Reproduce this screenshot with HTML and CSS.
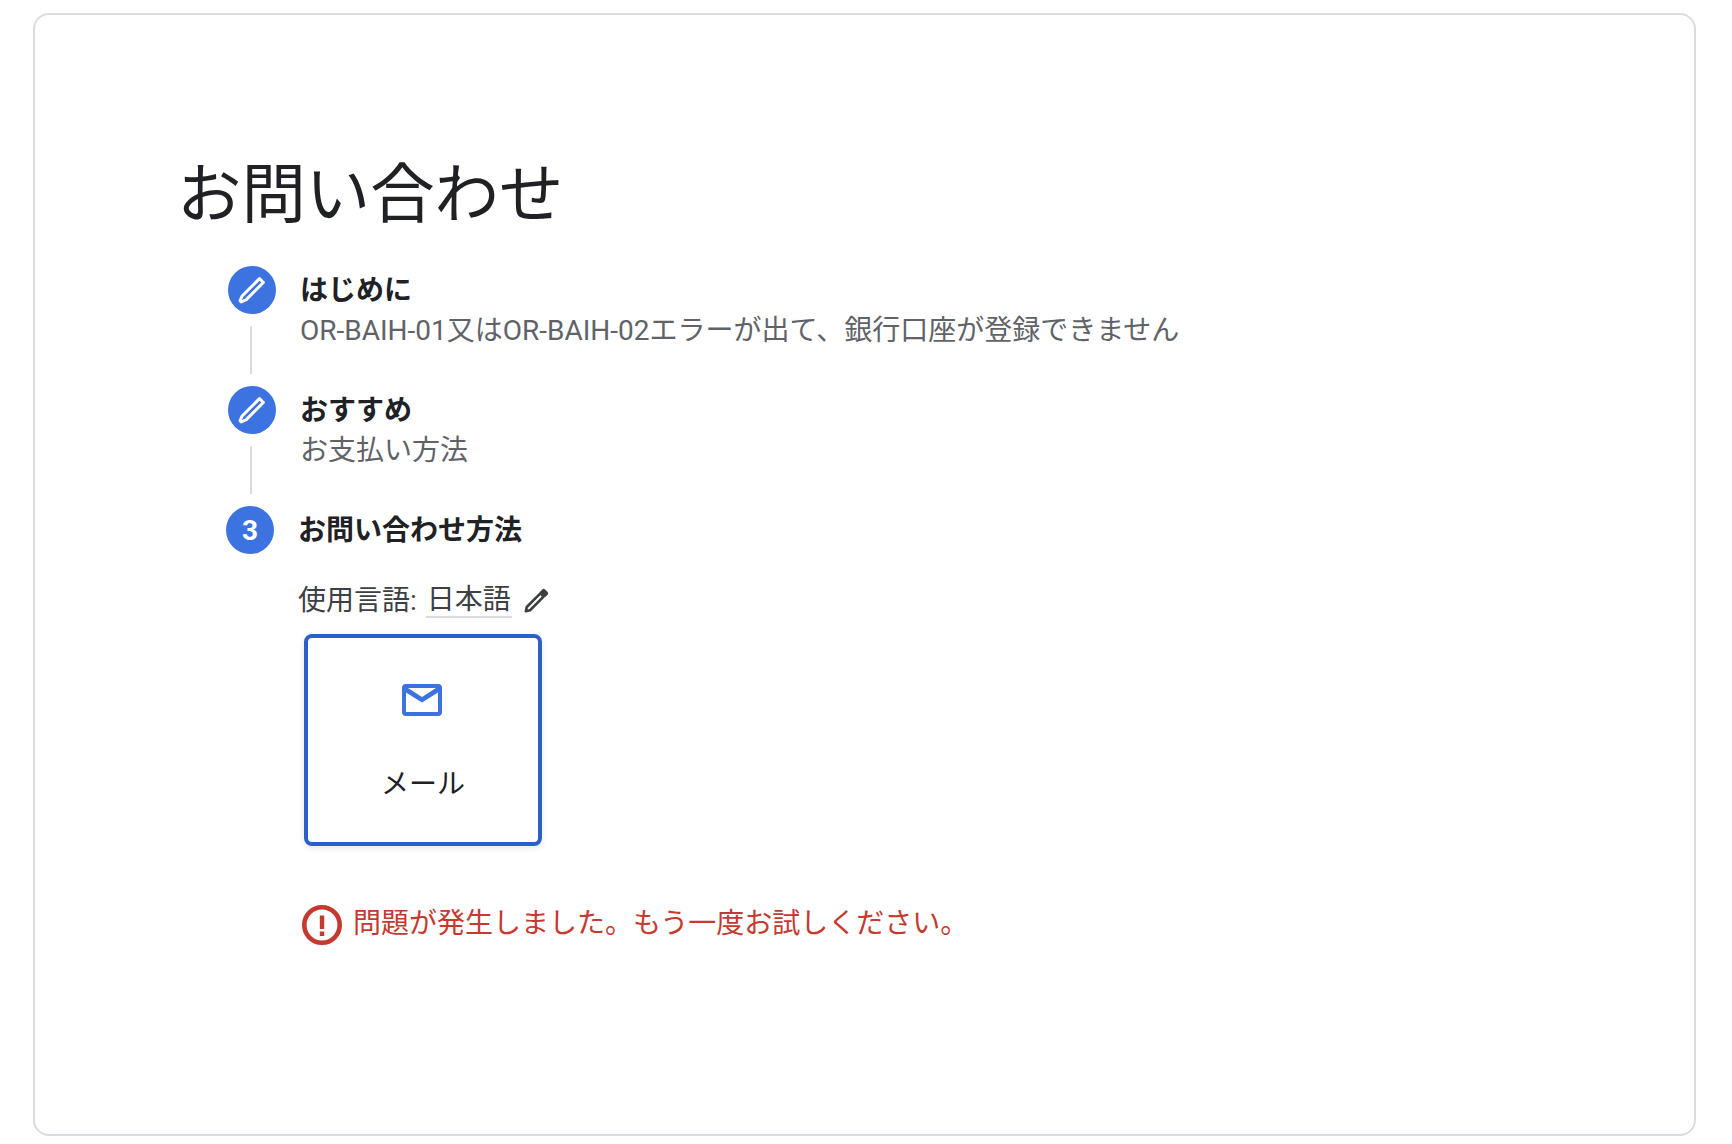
FILE: index.html
```html
<!DOCTYPE html>
<html lang="ja">
<head>
<meta charset="utf-8">
<title>お問い合わせ</title>
<link rel="stylesheet" href="styles.css">
</head>
<body>
<main class="card">
  <h1 class="title">お問い合わせ</h1>
  <section class="step">
    <div class="rail">
      <span class="badge">
        <svg class="badge-pencil" viewBox="0 0 28 28" fill="none" stroke="#fff" stroke-width="3" stroke-linejoin="round"><path d="M21.5 2.600 25.400 6.500 8 23.900 3.200 26 2 24.800 4.100 20Z"/></svg>
      </span>
      <span class="line"></span>
    </div>
    <div class="body">
      <h2 class="step-title">はじめに</h2>
      <p class="step-sub">OR-BAIH-01又はOR-BAIH-02エラーが出て、銀行口座が登録できません</p>
    </div>
  </section>
  <section class="step">
    <div class="rail">
      <span class="badge">
        <svg class="badge-pencil" viewBox="0 0 28 28" fill="none" stroke="#fff" stroke-width="3" stroke-linejoin="round"><path d="M21.5 2.600 25.400 6.500 8 23.900 3.200 26 2 24.800 4.100 20Z"/></svg>
      </span>
      <span class="line"></span>
    </div>
    <div class="body">
      <h2 class="step-title">おすすめ</h2>
      <p class="step-sub">お支払い方法</p>
    </div>
  </section>
  <section class="step step-current">
    <div class="rail">
      <span class="badge badge-num">3</span>
    </div>
    <div class="body">
      <h2 class="step-title">お問い合わせ方法</h2>
      <div class="lang">
        <span>使用言語:</span>
        <span class="lang-value">日本語</span>
        <svg class="lang-pencil" viewBox="0 0 24 24"><path fill="none" stroke="#3c4043" stroke-width="2.400" stroke-linejoin="round" d="M16 5 19 8 6.500 20.500 2.600 21.400 3.500 17.500Z"/><path fill="#3c4043" d="M15.500 3.600 17.800 1.300a1.800 1.800 0 0 1 2.500 0l2.400 2.400a1.800 1.800 0 0 1 0 2.500L20.400 8.500Z"/></svg>
      </div>
      <button class="channel" type="button">
        <svg class="mail" viewBox="0 0 40 32"><path fill="#3c73e0" fill-rule="evenodd" d="M4 0h32a4 4 0 0 1 4 4v24a4 4 0 0 1-4 4H4a4 4 0 0 1-4-4V4a4 4 0 0 1 4-4Zm0 8.500V28h32V8.500L20 18.500ZM6 4l14 9 14-9Z"/></svg>
        <span class="channel-label">メール</span>
      </button>
      <div class="error">
        <svg class="error-icon" viewBox="0 0 40 40"><circle cx="20" cy="20" r="17.700" fill="none" stroke="#c5392f" stroke-width="4.600"/><rect x="17.800" y="10.500" width="4.400" height="13.500" fill="#c5392f"/><rect x="17.800" y="26.500" width="4.400" height="4.500" fill="#c5392f"/></svg>
        <span class="error-text">問題が発生しました。もう一度お試しください。</span>
      </div>
    </div>
  </section>
</main>
</body>
</html>
```
FILE: styles.css
```css
* { box-sizing: border-box; }
html, body { margin: 0; background: #fff; }
body {
  padding: 13px 36px 8px 33px;
  font-family: Roboto, "Noto Sans CJK JP", sans-serif;
  color: #202124;
}
.card {
  height: 1123px;
  border: 2px solid #dcdce0;
  border-radius: 16px;
  padding: 145px 148px 0 193px;
  background: #fff;
}
.title {
  margin: 0 0 35px -51px;
  font-size: 64.4px;
  font-weight: 400;
  line-height: 71px;
  color: #202124;
}
.step { display: flex; margin-bottom: 12px; }
.rail {
  width: 48px;
  margin-right: 24px;
  display: flex;
  flex-direction: column;
  align-items: center;
  gap: 12px;
  flex: none;
}
.badge {
  width: 48px;
  height: 48px;
  border-radius: 50%;
  background: #3c73e0;
  display: flex;
  align-items: center;
  justify-content: center;
  color: #fff;
}
.badge-pencil { width: 28px; height: 28px; }
.badge-num { font-size: 28px; font-weight: 700; }
.line { width: 2px; height: 48px; margin-right: 2px; background: #dadce0; }
.body { flex: 1; padding-top: 1px; }
.step-title {
  margin: 0;
  font-size: 28px;
  font-weight: 700;
  line-height: 48px;
  color: #202124;
}
.step-sub {
  margin: -4px 0 0;
  font-size: 28px;
  line-height: 40px;
  color: #5f6368;
}
.step-current { margin-left: -2px; }
.lang {
  margin-top: 26px;
  display: flex;
  align-items: center;
  font-size: 28px;
  line-height: 40px;
  color: #3c4043;
  gap: 9px;
}
.lang-value { border-bottom: 2px solid #dcdce0; padding: 0 1px; line-height: 32px; }
.lang-pencil { width: 26px; height: 26px; margin-left: 2px; }
.channel {
  display: flex;
  flex-direction: column;
  align-items: center;
  width: 238px;
  height: 212px;
  margin: 13px 0 0 6px;
  padding: 46px 0 0;
  border: 4px solid #2a60c8;
  border-radius: 8px;
  background: #fff;
  box-shadow: 0 2px 6px rgba(60, 64, 67, .12);
  font-family: inherit;
}
.mail { width: 40px; height: 32px; display: block; margin-right: 2px; }
.channel-label {
  margin-top: 49px;
  font-size: 28px;
  line-height: 40px;
  color: #202124;
}
.error {
  display: flex;
  align-items: flex-start;
  margin: 59px 0 0 4px;
  gap: 11px;
}
.error-icon { width: 40px; height: 40px; flex: none; }
.error-text {
  font-size: 28px;
  line-height: 40px;
  color: #c5392f;
  margin-top: -1px;
}
```
